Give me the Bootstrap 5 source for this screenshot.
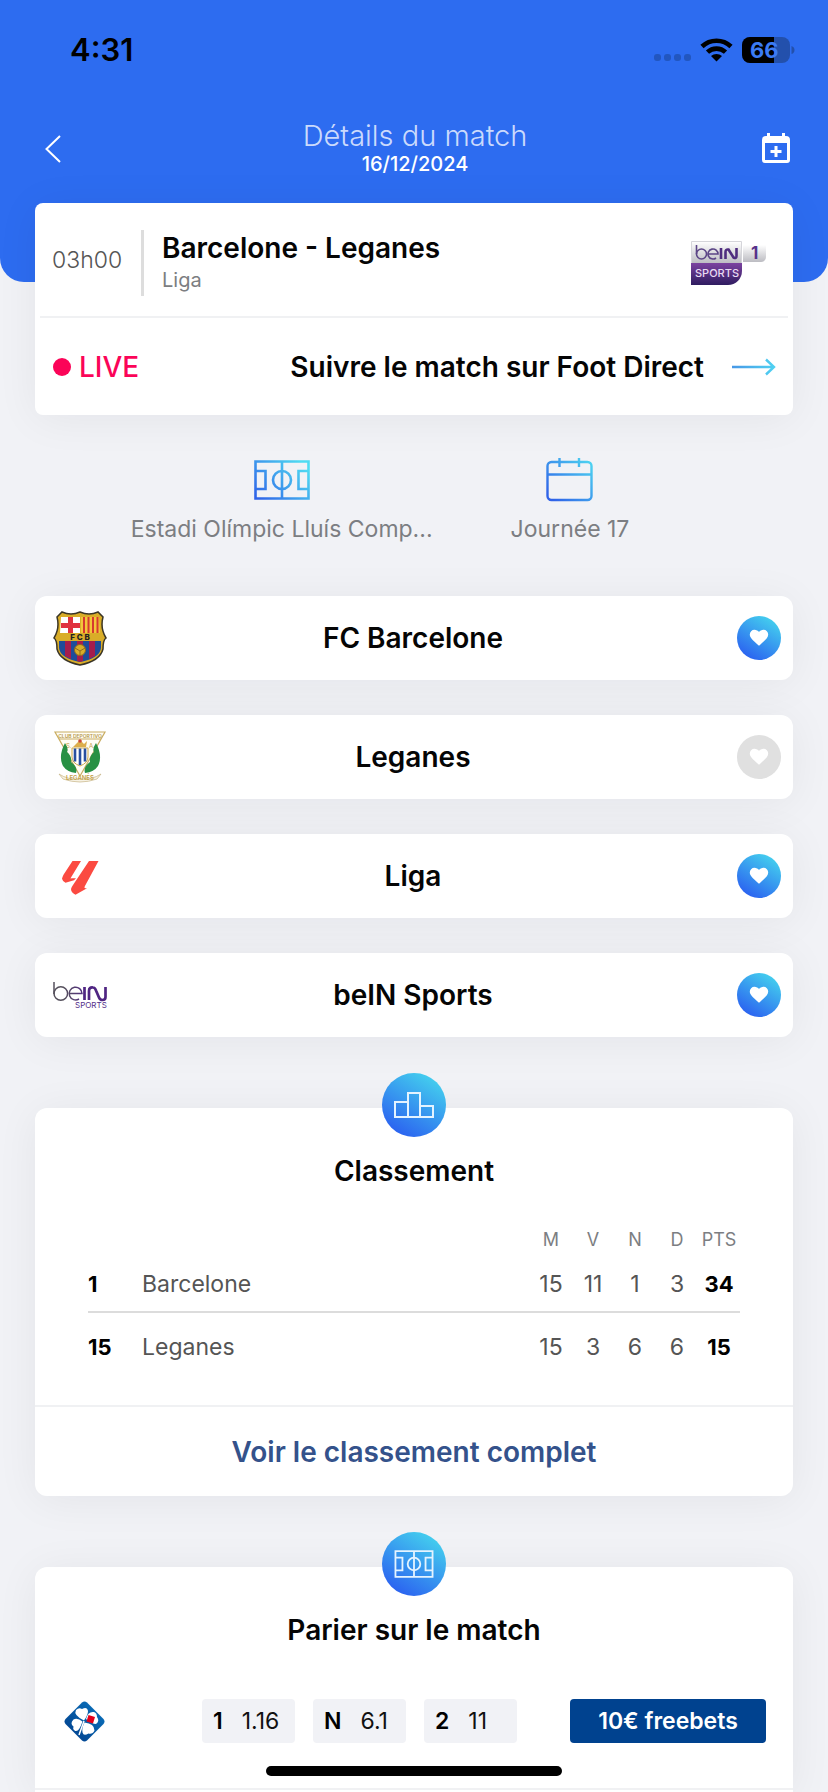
<!DOCTYPE html>
<html lang="fr">
<head>
<meta charset="utf-8">
<meta name="viewport" content="width=device-width, initial-scale=1">
<title>Détails du match</title>
<link href="https://cdn.jsdelivr.net/npm/bootstrap@5.3.0/dist/css/bootstrap.min.css" rel="stylesheet">
<style>
  :root { --blue: #2d6cf0; --sky: #45d4ef; --grad: linear-gradient(32deg, #2b62f0 12%, #45d4ee 92%); }
  body { font-family: Inter, "Noto Sans", sans-serif; background: #f1f2f6; color: #050505; font-size: 20px; line-height: 28px; }
  a, a:hover { color: inherit; text-decoration: none; }
  button { border: 0; padding: 0; background: none; color: inherit; }
  svg { display: block; flex: none; }
  .topbar { background: var(--blue); border-radius: 0 0 24px 24px; padding-bottom: 106px; }
  .status { height: 100px; padding: 0 33px 0 70px; color: #000; }
  .clock { font-size: 31px; font-weight: 600; }
  .navrow { padding: 20px 38px 0 40px; color: #fff; }
  .page-title { font-size: 29px; font-weight: 300; line-height: 32px; color: #cbdafc; }
  .page-date { font-size: 20px; font-weight: 500; line-height: 24px; }
  .sheet { margin: 0 35px; }
  .panel { background: #fff; border-radius: 12px; box-shadow: 0 4px 44px rgba(20, 25, 40, .06); }
  .match { border-radius: 8px; margin-top: -79px; position: relative; }
  .match-info { padding: 27px 22px 20px 12px; margin: 0 5px; border-bottom: 2px solid #f0f1f3; }
  .hour { width: 89px; font-weight: 300; font-size: 23px; color: #555; padding-bottom: 6px; }
  .teams { border-left: 3px solid #ddd; padding-left: 18px; height: 66px; }
  .head { font-size: 28px; font-weight: 600; line-height: 36px; }
  .muted { color: #7c7e82; }
  .live { padding: 0 16px 0 18px; height: 97px; }
  .live-tag { color: #fb0458; font-size: 28px; font-weight: 500; }
  .live-dot { width: 18px; height: 18px; background: #fb0458; border-radius: 50%; }
  .live-arrow { margin-left: 27px; }
  .facts { padding: 42px 70px 53px 0; column-gap: 76px; }
  .fact { font-size: 23px; row-gap: 11px; min-width: 118px; }
  .fact.place { min-width: 306px; }
  .fav { height: 84px; padding: 0 12px 0 18px; }
  .side { width: 56px; }
  .side.crest { width: 48px; }
  .heart { width: 44px; height: 44px; border-radius: 50%; background: var(--grad); place-items: center; }
  .heart.off { background: #e0e0e0; }
  .stack { gap: 35px; }
  .medal { width: 64px; height: 64px; border-radius: 50%; background: var(--grad); margin: -35px auto 0; }
  .block { margin-top: 71px; }
  .block h2 { margin: 16px 0 0; }
  .ranking { width: calc(100% - 106px); margin: 33px 53px 24px; font-size: 23px; color: #555; table-layout: fixed; }
  .ranking th, .ranking td { padding: 0; text-align: center; font-weight: 400; }
  .ranking thead th { font-size: 18px; height: 35px; color: #7c7e82; }
  .ranking tbody tr:first-child { height: 55px; border-bottom: 2px solid #dcdcdc; }
  .ranking tbody tr:last-child { height: 69px; }
  .ranking .strong { font-weight: 700; color: #000; font-size: 22px; }
  .ranking .start { text-align: left; }
  .full-link { border-top: 2px solid #f0f1f3; height: 91px; color: #34528b; }
  .full-link:hover { color: #34528b; }
  .bets { border-radius: 12px 12px 0 0; }
  .offer { padding: 51px 27px 45px 29px; border-bottom: 2px solid #f0f1f3; }
  .odds { gap: 18px; margin: 0 53px 0 auto; }
  .odd { width: 93px; height: 44px; border-radius: 4px; background: #f1f2f6; font-size: 23px; gap: 19px; color: #111; padding-left: 11px; }
  .odd b { font-weight: 600; color: #000; }
  .bonus { width: 196px; height: 44px; border-radius: 4px; background: #00428f; color: #fff; font-size: 23px; font-weight: 600; }
  .home-bar { position: fixed; bottom: 16px; left: 50%; width: 296px; height: 10px; margin-left: -148px; border-radius: 5px; background: #000; }
</style>
</head>
<body class="min-vh-100 d-flex flex-column">
<svg width="0" height="0" class="position-absolute" aria-hidden="true">
  <defs>
    <linearGradient id="g" gradientUnits="userSpaceOnUse" x1="6" y1="42" x2="48" y2="2"><stop offset="0" stop-color="#2f62e8"/><stop offset="1" stop-color="#4fdcf2"/></linearGradient>
    <linearGradient id="arrow" gradientUnits="userSpaceOnUse" x1="0" y1="0" x2="44" y2="0"><stop offset="0" stop-color="#4796e6"/><stop offset="1" stop-color="#50d2f2"/></linearGradient>
    <linearGradient id="silver" x1="0" y1="0" x2="0" y2="1"><stop offset="0" stop-color="#fff"/><stop offset="1" stop-color="#bcbcc2"/></linearGradient>
    <linearGradient id="violet" x1="0" y1="0" x2="0" y2="1"><stop offset="0" stop-color="#7c43a0"/><stop offset="1" stop-color="#2f1c60"/></linearGradient>
    <linearGradient id="bein" gradientUnits="userSpaceOnUse" x1="0" y1="0" x2="55" y2="0"><stop offset=".2" stop-color="#55505c"/><stop offset=".6" stop-color="#532a86"/></linearGradient>
    <linearGradient id="fdj" gradientUnits="userSpaceOnUse" x1="6" y1="35" x2="35" y2="6"><stop offset="0" stop-color="#02438f"/><stop offset="1" stop-color="#0a6fba"/></linearGradient>
    <symbol id="pitch" viewBox="0 0 56 40"><path d="M1.500 1.500h53v37h-53zM28 1.500v37M1.500 11h10v18h-10M54.500 11h-10v18h10"/><circle cx="28" cy="20" r="9"/></symbol>
    <symbol id="heart" viewBox="0 0 20 18"><path fill="#fff" d="M10 16.800 8.800 15.700C3.500 11 .8 8.600.8 5.500A4.600 4.600 0 0 1 5.500.8c1.800 0 3.500.9 4.500 2.300C11 1.700 12.700.8 14.500.8a4.600 4.600 0 0 1 4.700 4.700c0 3.100-2.700 5.500-8 10.200z"/></symbol>
  </defs>
</svg>

<header class="topbar">
  <div class="status d-flex align-items-center justify-content-between">
    <span class="clock">4:31</span>
    <div class="d-flex align-items-center">
      <svg width="141" height="28" viewBox="0 0 141 28">
        <g fill="#2256bf"><rect y="18" width="7" height="7" rx="3"/><rect x="10" y="18" width="7" height="7" rx="3"/><rect x="20" y="18" width="7" height="7" rx="3"/><rect x="30" y="18" width="7" height="7" rx="3"/></g>
        <g fill="none" stroke="#000" stroke-width="4.600"><path d="M48 10.500a21 21 0 0 1 29 0"/><path d="M53.500 16.200a13 13 0 0 1 18 0"/></g>
        <path d="M62.500 25.500 57 20a8.200 8.200 0 0 1 11 0z"/>
        <rect x="88" y="1" width="48" height="26" rx="8" fill="#2350ac"/><path d="M96 1h24v26H96a8 8 0 0 1-8-8V9a8 8 0 0 1 8-8z"/><path d="M137.500 10q3 1 3 4t-3 4z" fill="#2350ac"/>
        <text x="96" y="22" font-family="Inter, sans-serif" font-size="22" font-weight="700" fill="#3b7bf5">66</text>
      </svg>
    </div>
  </div>
  <nav class="navrow d-flex align-items-center justify-content-between">
    <button type="button" aria-label="Retour"><svg width="28" height="30" viewBox="0 0 28 30"><path d="M20 3 6.500 16 20 29" fill="none" stroke="#fff" stroke-width="2"/></svg></button>
    <div class="text-center">
      <h1 class="page-title mb-0">Détails du match</h1>
      <div class="page-date">16/12/2024</div>
    </div>
    <button type="button" aria-label="Ajouter au calendrier"><svg width="28" height="32" viewBox="0 0 28 32"><path fill="#fff" fill-rule="evenodd" d="M5 1h3v3h12V1h3v3h1a4 4 0 0 1 4 4v20a3 3 0 0 1-3 3H3a3 3 0 0 1-3-3V8a4 4 0 0 1 4-4h1zM3 11v17h22V11zM12.500 14h3v4h4v3h-4v4h-3v-4h-4v-3h4z"/></svg></button>
  </nav>
</header>

<main class="sheet flex-grow-1 d-flex flex-column">
  <section class="panel match">
    <div class="match-info d-flex align-items-center">
      <div class="hour">03h00</div>
      <div class="teams flex-grow-1">
        <h2 class="head mb-0">Barcelone - Leganes</h2>
        <div class="muted">Liga</div>
      </div>
      <svg width="75" height="44" viewBox="0 0 75 44" role="img" aria-label="beIN Sports 1">
        <path d="M.5.500h50v22H.5z" fill="url(#silver)" stroke="#d5d5da"/><path d="M0 22h51v8a14 14 0 0 1-14 14H0z" fill="url(#violet)"/>
        <path d="M52 4h23v12a5 5 0 0 1-5 5H52z" fill="url(#silver)"/>
        <g fill="none" stroke="#5c4687" stroke-width="1.600"><path d="M5.500 4v9"/><circle cx="10.500" cy="13" r="5"/><path d="M17.500 13h9.500a5 5 0 1 0-2 4"/></g>
        <path d="M30 7v11M34.500 18v-7q0-3 3-2.500l5 8q3 1.500 3-1.500V7" fill="none" stroke="#4f2d7f" stroke-width="2.600"/>
        <text x="4" y="36" font-family="Inter, sans-serif" font-size="11" font-weight="500" fill="#e8dcf3">SPORTS</text>
        <text x="60" y="18" font-family="Inter, sans-serif" font-size="17" font-weight="700" fill="#57318a">1</text>
      </svg>
    </div>
    <a href="#live" class="live d-flex align-items-center">
      <span class="live-dot me-2"></span><span class="live-tag">LIVE</span>
      <span class="head ms-auto">Suivre le match sur Foot Direct</span>
      <svg class="live-arrow" width="46" height="18" viewBox="0 0 46 18"><path d="M1 9h42M35 1.500 43 9l-8 7.500" fill="none" stroke="url(#arrow)" stroke-width="2.400"/></svg>
    </a>
  </section>

  <section class="facts d-flex justify-content-center muted">
    <div class="fact place d-flex flex-column align-items-center">
      <svg width="56" height="47" viewBox="0 -3 56 47" fill="none" stroke="url(#g)" stroke-width="2.600"><path d="M1.500 1.500h53v37h-53zM28 1.500v37M1.500 11h10v18h-10M54.500 11h-10v18h10"/><circle cx="28" cy="20" r="9"/></svg>
      <span>Estadi Olímpic Lluís Comp...</span>
    </div>
    <div class="fact d-flex flex-column align-items-center">
      <svg width="47" height="47" viewBox="0 0 47 47" fill="none" stroke="url(#g)" stroke-width="2.400"><rect x="1.500" y="5" width="44" height="38" rx="4"/><path d="M1.500 17.500h44M13.500 1v9M33 1v9"/></svg>
      <span>Journée 17</span>
    </div>
  </section>

  <div class="stack d-flex flex-column">
    <div class="panel fav d-flex align-items-center justify-content-between">
      <span class="side crest"><svg width="54" height="56" viewBox="0 0 54 56" role="img" aria-label="FC Barcelone">
        <path d="M4 7 9 2q9 4 18 0 9 4 18 0l5 5q-3 11 3 21-3 2-3 11-3 12-23 16Q7 51 4 39q0-9-3-11 6-10 3-21z" fill="#d9ad28" stroke="#3a3527" stroke-width="1.500"/>
        <path d="M8 7h19v16H7z" fill="#fff"/><path d="M15 7h5v6h7v5h-7v5h-5v-5H8v-5h7z" fill="#e0323e"/>
        <path d="M28 7h18l1 16H28z" fill="#f4c43b"/><path d="M31 7v16M35.500 7v16M40 7v16M44.500 7v16" stroke="#d6392f" stroke-width="2"/>
        <path d="M6 31h42v7q-1 10-21 14Q7 48 6 38z" fill="#1e4c99"/><path d="M12 31h6v18l-6-3zM24 31h6v20l-3 1-3-1zM36 31h6v15l-6 3z" fill="#a51d4c"/>
        <circle cx="27" cy="40" r="5.500" fill="#d9ad28" stroke="#8f6b1c"/><path d="m22 38 5 3 5-3m-5 3v5" fill="none" stroke="#8f6b1c"/>
        <text x="27" y="30" text-anchor="middle" font-family="Inter, sans-serif" font-size="8" font-weight="800" fill="#222">F C B</text>
      </svg></span>
      <h2 class="head mb-0">FC Barcelone</h2>
      <span class="side d-flex justify-content-end"><button type="button" class="heart d-grid" aria-label="Retirer FC Barcelone des favoris"><svg width="20" height="18"><use href="#heart"/></svg></button></span>
    </div>
    <div class="panel fav d-flex align-items-center justify-content-between">
      <span class="side crest"><svg width="54" height="54" viewBox="0 0 54 54" role="img" aria-label="Leganes">
        <path d="M2 2h50L27 46z" fill="#fffdf5" stroke="#c9ad62" stroke-width="1.200"/><path d="M6 9h42" stroke="#c9ad62"/>
        <text x="27" y="8" text-anchor="middle" font-family="Inter, sans-serif" font-size="5" font-weight="600" fill="#b89b4e">CLUB DEPORTIVO</text>
        <text x="13" y="18" font-family="Inter, sans-serif" font-size="6" fill="#c3a048">S.</text><text x="36" y="18" font-family="Inter, sans-serif" font-size="6" fill="#c3a048">A.</text>
        <path d="m20 17 3-3 4-4 4 4 3-3-1 6H21z" fill="#dcae4c"/><circle cx="27" cy="11" r="1.800" fill="#cc4936"/>
        <path d="M19 18h16v9q0 6-8 9-8-3-8-9z" fill="#fff" stroke="#cda748"/><path d="M22 18.500v13M27 18.500V35M32 18.500v13" stroke="#2950a0" stroke-width="2.600"/>
        <path d="M12 13q4 6 2 9 5 4 4 10 7 5 5 11-9-1-13-7-5-10 2-23zM43 13q-4 6-2 9-5 4-4 10-7 5-5 11 9-1 13-7 5-10-2-23z" fill="#289044"/>
        <path d="M6 44q9 6 21 5 12 1 21-5l-4 5q-17 6-34 0z" fill="#f7f2e4" stroke="#c5b382" stroke-width=".7"/>
        <text x="27" y="50" text-anchor="middle" font-family="Inter, sans-serif" font-size="6" font-weight="600" fill="#c3a048">LEGANÉS</text>
      </svg></span>
      <h2 class="head mb-0">Leganes</h2>
      <span class="side d-flex justify-content-end"><button type="button" class="heart off d-grid" aria-label="Ajouter Leganes aux favoris"><svg width="20" height="18"><use href="#heart"/></svg></button></span>
    </div>
    <div class="panel fav d-flex align-items-center justify-content-between">
      <span class="side crest"><svg width="54" height="40" viewBox="0 -4 54 40" role="img" aria-label="Liga"><path fill="#fb4a41" d="M19.500 1H28L18 17.500q-1 1.500.5.800H23l-2 2-8.500 2.500q-3-1.500-3.500-4 .5-2 1.500-4zM36 1h9.500L31.800 26.200q-1 2 .5 2H34l-11.500 6.500Q18 32.500 18 29q.5-2 2-4z"/></svg></span>
      <h2 class="head mb-0">Liga</h2>
      <span class="side d-flex justify-content-end"><button type="button" class="heart d-grid" aria-label="Retirer Liga des favoris"><svg width="20" height="18"><use href="#heart"/></svg></button></span>
    </div>
    <div class="panel fav d-flex align-items-center justify-content-between">
      <span class="side crest"><svg width="56" height="27" viewBox="0 0 56 27" role="img" aria-label="beIN Sports">
        <g fill="none" stroke="url(#bein)" stroke-width="1.500"><path d="M1 0v12"/><circle cx="7.800" cy="11.500" r="6.800"/><path d="M16.500 11.500H29a6.400 6.400 0 1 0-3 5.500"/></g>
        <path d="M31.500 5v13M36 18v-9q0-4 4-3.500 2 0 3 3l3 7q1 2.500 3.500 2.500 3 0 3-3V5" fill="none" stroke="#4f2582" stroke-width="2.700"/>
        <text x="22" y="26" font-family="Inter, sans-serif" font-size="8" fill="#54308a">SPORTS</text>
      </svg></span>
      <h2 class="head mb-0">beIN Sports</h2>
      <span class="side d-flex justify-content-end"><button type="button" class="heart d-grid" aria-label="Retirer beIN Sports des favoris"><svg width="20" height="18"><use href="#heart"/></svg></button></span>
    </div>
  </div>

  <section class="panel block d-flex flex-column">
    <div class="medal d-flex align-items-center justify-content-center"><svg width="40" height="26" viewBox="0 0 40 26" fill="none" stroke="#e4f3ff" stroke-width="2"><path d="M1 25V10h13V1h12v13h13v11zM14 10v15M26 14v11"/></svg></div>
    <h2 class="head text-center">Classement</h2>
    <table class="ranking">
      <colgroup><col style="width:54px"><col><col style="width:42px"><col style="width:42px"><col style="width:42px"><col style="width:42px"><col style="width:42px"></colgroup>
      <thead><tr><th></th><th></th><th scope="col">M</th><th scope="col">V</th><th scope="col">N</th><th scope="col">D</th><th scope="col">PTS</th></tr></thead>
      <tbody>
        <tr><td class="start strong">1</td><td class="start">Barcelone</td><td>15</td><td>11</td><td>1</td><td>3</td><td class="strong">34</td></tr>
        <tr><td class="start strong">15</td><td class="start">Leganes</td><td>15</td><td>3</td><td>6</td><td>6</td><td class="strong">15</td></tr>
      </tbody>
    </table>
    <a href="#classement" class="full-link head d-flex align-items-center justify-content-center">Voir le classement complet</a>
  </section>

  <section class="panel block bets flex-grow-1 d-flex flex-column">
    <div class="medal d-flex align-items-center justify-content-center"><svg width="40" height="28" fill="none" stroke="#e4f3ff" stroke-width="2.600"><use href="#pitch"/></svg></div>
    <h2 class="head text-center">Parier sur le match</h2>
    <div class="offer d-flex align-items-center">
      <svg width="41" height="41" viewBox="0 0 41 41" role="img" aria-label="FDJ"><path d="m18 1.500q2.500-2 5 0L39.500 18q2 2.500 0 5L23 39.500q-2.500 2-5 0L1.500 23q-2-2.500 0-5z" fill="url(#fdj)"/><g fill="#fff"><path d="M20 19.500Q9 14 12 9q3-3 6-1 5-3 6 2 0 4-4 9.500zM18.500 20.500q-4 12-8 9-2-2-1-4-4-3 0-7 4-2 9 2zM20.500 21.500q10 1 10 8-2 4-6 3-5 3-6-1-1-4 2-10zM22 18q2-8 8-7 3 1 3 5 3 4-1 7-4 0-10-5z"/><path d="m20 20-5 14" stroke="#fff" stroke-width="1.500"/></g><path d="m24.500 14 6.500 2-2 6.500-6.500-2z" fill="#e1001a"/></svg>
      <div class="odds d-flex">
        <button type="button" class="odd d-flex align-items-center"><b>1</b><span>1.16</span></button>
        <button type="button" class="odd d-flex align-items-center"><b>N</b><span>6.1</span></button>
        <button type="button" class="odd d-flex align-items-center"><b>2</b><span>11</span></button>
      </div>
      <button type="button" class="bonus">10€ freebets</button>
    </div>
  </section>
</main>
<div class="home-bar"></div>
<script src="https://cdn.jsdelivr.net/npm/bootstrap@5.3.0/dist/js/bootstrap.bundle.min.js"></script>
</body>
</html>
